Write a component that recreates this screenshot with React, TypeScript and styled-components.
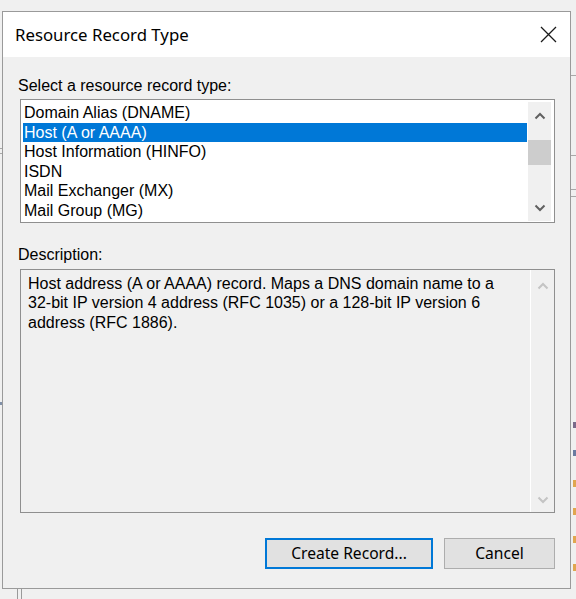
import React from "react";
import styled, { createGlobalStyle } from "styled-components";

const GlobalStyle = createGlobalStyle`
  html, body { margin: 0; padding: 0; background: #f0f0f0; }
  * { box-sizing: border-box; }
`;

const Stage = styled.div`
  position: relative;
  width: 576px;
  height: 599px;
  overflow: hidden;
  background: #f0f0f0;
  padding: 11px 0 0 2px;
`;

const Mark = styled.div<{ $c?: string }>`
  position: absolute;
  background: ${(p) => p.$c || "#a8a8a8"};
`;

const Dialog = styled.div`
  position: relative;
  width: 569px;
  border: 1px solid #9a9a9a;
  background: #f0f0f0;
  display: flex;
  flex-direction: column;
`;

const TitleBar = styled.div`
  height: 45px;
  background: #ffffff;
  display: flex;
  align-items: center;
  justify-content: space-between;
  padding: 0 13px 0 12px;
`;

const Title = styled.span`
  font-family: "Noto Sans", "Open Sans", sans-serif;
  font-size: 16.8px;
  color: #000;
`;

const CloseIcon = styled.svg`
  width: 17px;
  height: 17px;
  display: block;
`;

const Body = styled.div`
  height: 531px;
  padding: 19px 15px 19px 17px;
  display: flex;
  flex-direction: column;
  font-family: "Liberation Sans", Arial, sans-serif;
  font-size: 16px;
  color: #000;
`;

const Label = styled.div<{ $gap: number }>`
  line-height: 19px;
  height: 19px;
  margin-left: -2px;
  margin-bottom: ${(p) => p.$gap}px;
`;

const ListBox = styled.div`
  height: 124px;
  border: 1px solid #8f8f8f;
  background: #fff;
  display: flex;
  padding: 2px 3px 1px 1px;
  margin-bottom: 22px;
`;

const Rows = styled.div`
  flex: 1;
  padding: 1px 0 0 1px;
  margin-right: 1px;
  overflow: hidden;
`;

const Row = styled.div<{ $selected?: boolean }>`
  height: 19.6px;
  line-height: 19.6px;
  padding-left: 1px;
  white-space: nowrap;
  background: ${(p) => (p.$selected ? "#0078d7" : "transparent")};
  color: ${(p) => (p.$selected ? "#fff" : "#000")};
`;

const ScrollBar = styled.div<{ $disabled?: boolean }>`
  width: 23px;
  background: #f0f0f0;
  display: flex;
  flex-direction: column;
  align-items: stretch;
  ${(p) => (p.$disabled ? "border-left: 1px solid #ffffff; width: 24px;" : "")}
`;

const ArrowBtn = styled.div<{ $h: number }>`
  height: ${(p) => p.$h}px;
  display: flex;
  align-items: center;
  justify-content: center;
`;

const Track = styled.div`
  flex: 1;
  padding-top: 10px;
`;

const Thumb = styled.div`
  height: 25px;
  background: #cdcdcd;
`;

const DescBox = styled.div`
  height: 245px;
  border: 1px solid #8f8f8f;
  background: #f0f0f0;
  display: flex;
  margin-bottom: 25px;
`;

const DescText = styled.div`
  flex: 1;
  padding: 4px 0 0 7px;
  line-height: 19.5px;
`;

const ButtonRow = styled.div`
  display: flex;
  justify-content: flex-end;
  gap: 11px;
`;

const Button = styled.button<{ $default?: boolean; $w: number }>`
  width: ${(p) => p.$w}px;
  height: 31px;
  background: #e1e1e1;
  border: ${(p) => (p.$default ? "2px solid #0078d7" : "1px solid #adadad")};
  font-family: "Noto Sans", "Open Sans", sans-serif;
  font-size: 15.6px;
  color: #000;
  padding: 0 0 2px 0;
  margin: 0;
  border-radius: 0;
`;

const Chevron = ({ up, color }: { up?: boolean; color: string }) => (
  <svg width="12" height="8" viewBox="0 0 12 8">
    <polyline
      points={up ? "1.5,6.5 6,2 10.5,6.5" : "1.5,1.5 6,6 10.5,1.5"}
      fill="none"
      stroke={color}
      strokeWidth="2"
    />
  </svg>
);

const items = [
  "Domain Alias (DNAME)",
  "Host (A or AAAA)",
  "Host Information (HINFO)",
  "ISDN",
  "Mail Exchanger (MX)",
  "Mail Group (MG)",
];

export default function App() {
  return (
    <>
      <GlobalStyle />
      <Stage>
        <Mark style={{ left: 0, top: 148, width: 2, height: 1 }} />
        <Mark style={{ left: 0, top: 153, width: 2, height: 1 }} />
        <Mark style={{ left: 0, top: 402, width: 2, height: 3 }} $c="#8090a8" />
        <Mark style={{ left: 571, top: 75, width: 5, height: 1 }} />
        <Mark style={{ left: 571, top: 155, width: 5, height: 1 }} />
        <Mark style={{ left: 571, top: 189, width: 5, height: 1 }} />
        <Mark style={{ left: 571, top: 196, width: 5, height: 1 }} />
        <Mark style={{ left: 573, top: 422, width: 3, height: 6 }} $c="#7a6a8a" />
        <Mark style={{ left: 573, top: 450, width: 3, height: 6 }} $c="#6a7aa0" />
        <Mark style={{ left: 573, top: 480, width: 3, height: 7 }} $c="#e0a650" />
        <Mark style={{ left: 573, top: 508, width: 3, height: 7 }} $c="#e0a650" />
        <Mark style={{ left: 573, top: 536, width: 3, height: 7 }} $c="#e0a650" />
        <Mark style={{ left: 573, top: 564, width: 3, height: 7 }} $c="#e0a650" />
        <Mark style={{ left: 17, top: 589, width: 1, height: 10 }} $c="#9a9a9a" />
        <Mark style={{ left: 21, top: 589, width: 1, height: 10 }} $c="#9a9a9a" />
        <Dialog>
          <TitleBar>
            <Title>Resource Record Type</Title>
            <CloseIcon viewBox="0 0 17 17">
              <path d="M1 1 L16 16 M16 1 L1 16" stroke="#1a1a1a" strokeWidth="1.3" fill="none" />
            </CloseIcon>
          </TitleBar>
          <Body>
            <Label $gap={4}>Select a resource record type:</Label>
            <ListBox>
              <Rows>
                {items.map((it) => (
                  <Row key={it} $selected={it === "Host (A or AAAA)"}>
                    {it}
                  </Row>
                ))}
              </Rows>
              <ScrollBar>
                <ArrowBtn $h={28}>
                  <Chevron up color="#606060" />
                </ArrowBtn>
                <Track>
                  <Thumb />
                </Track>
                <ArrowBtn $h={26}>
                  <Chevron color="#606060" />
                </ArrowBtn>
              </ScrollBar>
            </ListBox>
            <Label $gap={5}>Description:</Label>
            <DescBox>
              <DescText>
                Host address (A or AAAA) record. Maps a DNS domain name to a
                <br />
                32-bit IP version 4 address (RFC 1035) or a 128-bit IP version 6
                <br />
                address (RFC 1886).
              </DescText>
              <ScrollBar $disabled>
                <ArrowBtn $h={32}>
                  <Chevron up color="#c4c4c4" />
                </ArrowBtn>
                <Track />
                <ArrowBtn $h={25}>
                  <Chevron color="#c4c4c4" />
                </ArrowBtn>
              </ScrollBar>
            </DescBox>
            <ButtonRow>
              <Button $default $w={168}>Create Record...</Button>
              <Button $w={111}>Cancel</Button>
            </ButtonRow>
          </Body>
        </Dialog>
      </Stage>
    </>
  );
}
